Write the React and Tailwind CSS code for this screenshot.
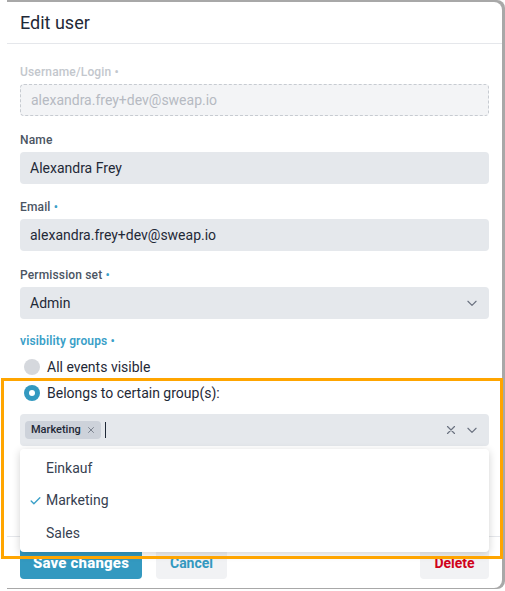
import React from "react";

const font = { fontFamily: "Roboto, 'Liberation Sans', sans-serif" };

function Dot({ muted }) {
  return <span className={muted ? "text-[#c3c7cd]" : "text-[#3aa0c8]"}> •</span>;
}

function Label({ children, required, muted, className = "" }) {
  return (
    <div
      className={`h-4 text-xs leading-4 font-medium tracking-[0.15px] ${muted ? "text-[#c3c7cd]" : "text-[#4b5563]"} ${className}`}
    >
      {children}
      {required && <Dot muted={muted} />}
    </div>
  );
}

function Chevron({ className = "" }) {
  return (
    <svg width="14" height="14" viewBox="0 0 24 24" fill="none" stroke="#6b7280" strokeWidth="2" strokeLinecap="round" strokeLinejoin="round" className={className}>
      <path d="M5 9l7 7 7-7" />
    </svg>
  );
}

function Cross({ size = 14, color = "#6b7280", width = 2 }) {
  return (
    <svg width={size} height={size} viewBox="0 0 24 24" fill="none" stroke={color} strokeWidth={width} strokeLinecap="round">
      <path d="M6 6l12 12M18 6L6 18" />
    </svg>
  );
}

export default function App() {
  return (
    <div className="relative w-[505px] h-[591px] bg-white overflow-hidden" style={font}>
      {/* dimmed backdrop edge behind the dialog */}
      <div className="ml-[7px] w-[498px] h-[589px] bg-[#a8a8a8] pt-[2px] pr-[3px] pb-[2px] rounded-br-lg rounded-tr-lg">
        <div className="flex flex-col h-[586px] w-[495px] bg-white rounded-r-lg">
          <div className="h-[42px] flex items-center px-[13px] border-b border-[#e5e7eb]">
            <h1 className="text-lg text-[#1f2937] leading-6">Edit user</h1>
          </div>

          <div className="flex-1 px-[13px]">
            <Label required muted className="mt-[20px]">Username/Login</Label>
            <div className="mt-1 h-8 rounded border border-dashed border-[#c7cbd1] bg-[#f3f4f6] flex items-center px-[10px] text-sm text-[#b6bac2]">
              alexandra.frey+dev@sweap.io
            </div>

            <Label className="mt-4">Name</Label>
            <div className="mt-1 h-8 rounded bg-[#e5e8ec] flex items-center px-[10px] text-sm text-[#1f2937]">
              Alexandra Frey
            </div>

            <Label required className="mt-[15px]">Email</Label>
            <div className="mt-1 h-8 rounded bg-[#e5e8ec] flex items-center px-[10px] text-sm text-[#1f2937]">
              alexandra.frey+dev@sweap.io
            </div>

            <Label required className="mt-4">Permission set</Label>
            <div className="mt-1 h-8 rounded bg-[#e5e8ec] flex items-center justify-between pl-[10px] pr-[10px] text-sm text-[#1f2937]">
              <span>Admin</span>
              <Chevron />
            </div>

            <div className="mt-[14px] h-4 text-xs leading-4 font-semibold tracking-[0.15px] text-[#3aa0c8]">
              visibility groups<span> •</span>
            </div>

            <div className="mt-[5px] flex items-center h-[26px] pl-[4px] text-sm text-[#1f2937]">
              <span className="w-4 h-4 rounded-full bg-[#d5d8dd] mr-[7px]" />
              All events visible
            </div>
            <div className="flex items-center h-[26px] pl-[4px] text-sm text-[#1f2937]">
              <span className="w-4 h-4 rounded-full bg-[#3399c0] mr-[7px] flex items-center justify-center">
                <span className="w-[6px] h-[6px] rounded-full bg-white" />
              </span>
              Belongs to certain group(s):
            </div>

            <div className="mt-[8px] h-8 rounded bg-[#e5e8ec] flex items-center pl-[5px] pr-[10px]">
              <span className="h-[18px] rounded-sm bg-[#cdd2da] flex items-center pl-[6px] pr-[5px] text-[11px] font-medium text-[#1f2937]">
                Marketing
                <span className="ml-[5px]">
                  <Cross size={10} color="#6b7280" width={2} />
                </span>
              </span>
              <span className="ml-[4px] w-px h-4 bg-[#1f2937]" />
              <span className="ml-auto flex items-center gap-[7px]">
                <Cross size={14} />
                <Chevron />
              </span>
            </div>
          </div>

          <div className="border-t border-[#e5e7eb] px-[13px] pt-[10px] pb-[9px] flex items-center">
            <button className="h-8 w-[122px] rounded bg-[#3399c0] text-white text-[15px] font-extrabold tracking-[0.2px]">Save changes</button>
            <button className="ml-[14px] h-8 w-[71px] rounded bg-[#f1f2f4] text-[#3399c0] text-sm font-bold">Cancel</button>
            <button className="ml-auto h-8 w-[69px] rounded bg-[#f1f2f4] text-[#d0021b] text-sm font-bold">Delete</button>
          </div>
        </div>
      </div>

      {/* open options list of the group select */}
      <div className="absolute left-[20px] top-[449px] w-[469px] h-[103px] bg-white rounded shadow-[0_2px_8px_rgba(0,0,0,0.18)] pt-[2px] text-sm text-[#374151]">
        <div className="h-[33px] flex items-center pl-[26px]">Einkauf</div>
        <div className="h-[32px] flex items-center pl-[9px]">
          <svg width="13" height="13" viewBox="0 0 24 24" fill="none" stroke="#3aa0c8" strokeWidth="2.5" strokeLinecap="round" strokeLinejoin="round" className="mr-[4px]">
            <path d="M4 13l5 5L20 7" />
          </svg>
          Marketing
        </div>
        <div className="h-[33px] flex items-center pl-[26px]">Sales</div>
      </div>

      {/* highlight frame */}
      <div className="absolute left-[1px] top-[378px] w-[502px] h-[181px] border-[3px] border-[#ffa500] pointer-events-none" />
    </div>
  );
}
